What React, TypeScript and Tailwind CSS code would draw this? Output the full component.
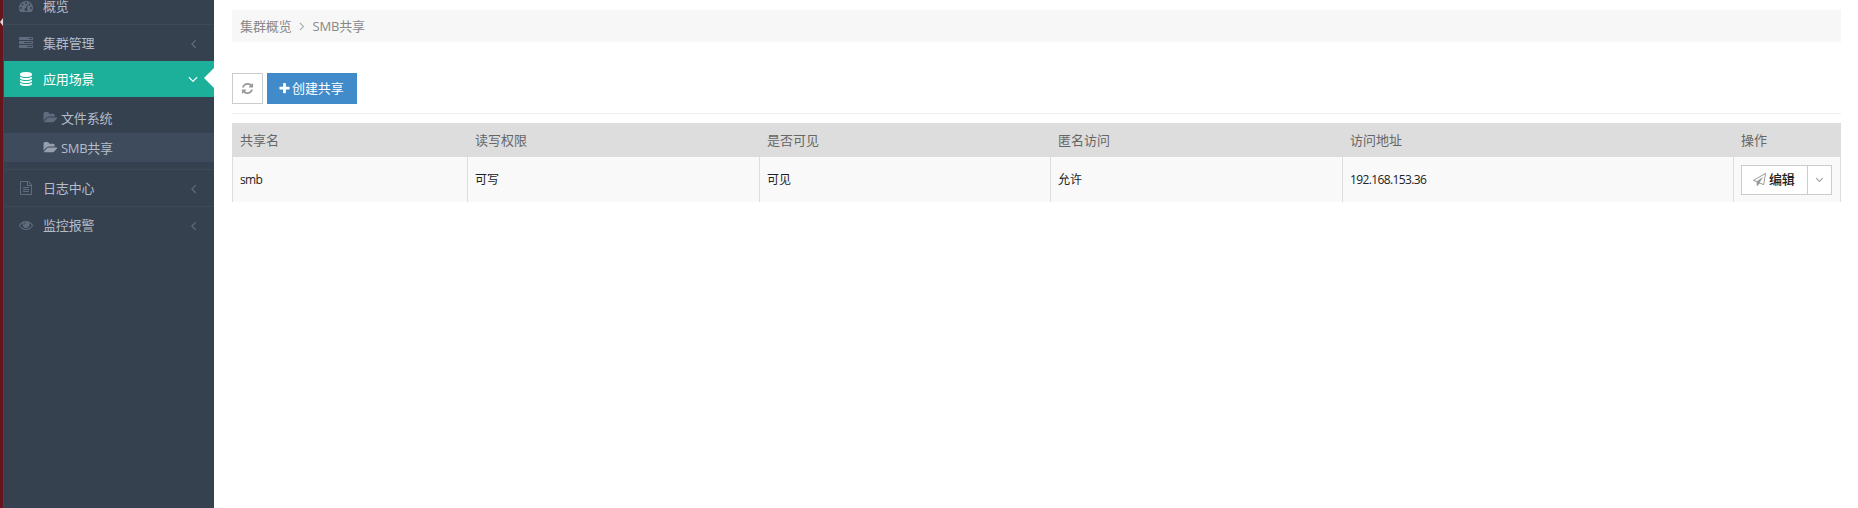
import React from 'react';

const dot = 'q0-53-37.5-90.5t-90.5-37.5-90.5 37.5-37.5 90.5 37.5 90.5 90.5 37.5 90.5-37.5 37.5-90.5z';
const bar = 'v256q0 26-19 45t-45 19h-1664q-26 0-45-19t-19-45v-256q0-26 19-45t45-19h1664q26 0 45 19t19 45z';
const disk = 'q237 0 443-43t325-127v170q0 69-103 128t-280 93.5-385 34.5-385-34.5-280-93.5-103-128v-170q119 84 325 127t443 43z';

const paths = {
  dashboard: `M384 1152${dot}m192-448${dot}m428 481l101-382q6-26-7.5-48.5t-38.5-29.5-48 6.5-30 39.5l-101 382q-60 5-107 43.5t-63 98.5q-20 77 20 146t117 89 146-20 89-117q16-60-6-117t-72-91zm660-33${dot}m-640-640${dot}m448 192${dot}m320 448q0 261-141 483-19 29-54 29h-1402q-35 0-54-29-141-221-141-483 0-182 71-348t191-286 286-191 348-71 348 71 286 191 191 286 71 348z`,
  tasks: `M1024 1408h640v-128h-640v128zm-384-512h1024v-128h-1024v128zm640-512h384v-128h-384v128zm512 832${bar}m0-512${bar}m0-512${bar}`,
  database: `M896 768${disk}m0 768${disk}m0-384${disk}m0-1152q208 0 385 34.5t280 93.5 103 128v128q0 69-103 128t-280 93.5-385 34.5-385-34.5-280-93.5-103-128v-128q0-69 103-128t280-93.5 385-34.5z`,
  folder: 'M1815 952q0 31-31 66l-336 396q-43 51-120.5 86.5t-143.5 35.5h-1088q-34 0-60.5-13t-26.5-43q0-31 31-66l336-396q43-51 120.5-86.5t143.5-35.5h1088q34 0 60.5 13t26.5 43zm-343-344v160h-832q-94 0-197 47.5t-164 119.5l-337 396-5 6q0-4-.5-12.5t-.5-12.5v-960q0-92 66-158t158-66h320q92 0 158 66t66 158v32h544q92 0 158 66t66 158z',
  file: 'M1596 380q28 28 48 76t20 88v1152q0 40-28 68t-68 28h-1344q-40 0-68-28t-28-68v-1600q0-40 28-68t68-28h896q40 0 88 20t76 48zm-444-244v376h376q-10-29-22-41l-313-313q-12-12-41-22zm384 1528v-1024h-416q-40 0-68-28t-28-68v-416h-768v1536h1280zm-1024-864q0-14 9-23t23-9h704q14 0 23 9t9 23v64q0 14-9 23t-23 9h-704q-14 0-23-9t-9-23v-64zm736 224q14 0 23 9t9 23v64q0 14-9 23t-23 9h-704q-14 0-23-9t-9-23v-64q0-14 9-23t23-9h704zm0 256q14 0 23 9t9 23v64q0 14-9 23t-23 9h-704q-14 0-23-9t-9-23v-64q0-14 9-23t23-9h704z',
  eye: 'M1664 960q-152-236-381-353 61 104 61 225 0 185-131.5 316.5t-316.5 131.5-316.5-131.5-131.5-316.5q0-121 61-225-229 117-381 353 133 205 333.5 326.5t434.5 121.5 434.5-121.5 333.5-326.5zm-720-384q0-20-14-34t-34-14q-125 0-214.5 89.5t-89.5 214.5q0 20 14 34t34 14 34-14 14-34q0-86 61-147t147-61q20 0 34-14t14-34zm848 384q0 34-20 69-140 230-376.5 368.5t-499.5 138.5-499.5-139-376.5-368q-20-35-20-69t20-69q140-229 376.5-368t499.5-139 499.5 139 376.5 368q20 35 20 69z',
  left: 'M1203 544q0 13-10 23l-393 393 393 393q10 10 10 23t-10 23l-50 50q-10 10-23 10t-23-10l-466-466q-10-10-10-23t10-23l466-466q10-10 23-10t23 10l50 50q10 10 10 23z',
  right: 'M1171 960q0 13-10 23l-466 466q-10 10-23 10t-23-10l-50-50q-10-10-10-23t10-23l393-393-393-393q-10-10-10-23t10-23l50-50q10-10 23-10t23 10l466 466q10 10 10 23z',
  down: 'M1395 736q0 13-10 23l-466 466q-10 10-23 10t-23-10l-466-466q-10-10-10-23t10-23l50-50q10-10 23-10t23 10l393 393 393-393q10-10 23-10t23 10l50 50q10 10 10 23z',
  plus: 'M1600 736v192q0 40-28 68t-68 28h-416v416q0 40-28 68t-68 28h-192q-40 0-68-28t-28-68v-416h-416q-40 0-68-28t-28-68v-192q0-40 28-68t68-28h416v-416q0-40 28-68t68-28h192q40 0 68 28t28 68v416h416q40 0 68 28t28 68z',
  refresh: 'M1639 1056q0 5-1 7-64 268-268 434.5t-478 166.5q-146 0-282.5-55t-243.5-157l-129 129q-19 19-45 19t-45-19-19-45v-448q0-26 19-45t45-19h448q26 0 45 19t19 45-19 45l-137 137q71 66 161 102t187 36q134 0 250-65t186-179q11-17 53-117 8-23 30-23h192q13 0 22.5 9.5t9.5 22.5zm25-800v448q0 26-19 45t-45 19h-448q-26 0-45-19t-19-45 19-45l138-138q-148-137-349-137-134 0-250 65t-186 179q-11 17-53 117-8 23-30 23h-199q-13 0-22.5-9.5t-9.5-22.5v-7q65-268 270-434.5t480-166.5q146 0 284 55.5t245 156.5l130-129q19-19 45-19t45 19 19 45z',
  plane: 'M1764 11q33 24 27 64l-256 1536q-5 29-32 45-14 8-31 8-11 0-24-5l-527-215-298 327q-18 21-47 21-14 0-23-4-19-7-30-23.5t-11-36.5v-452l-472-193q-37-14-40-55-3-39 32-59l1664-960q35-21 68 2zm-342 1499l221-1323-1434 827 336 137 863-639-478 797z',
};

type IconName = keyof typeof paths;

function Icon({ name, className }: { name: IconName; className: string }) {
  return (
    <svg viewBox="0 0 1792 1792" fill="currentColor" className={`shrink-0 overflow-visible ${className}`} aria-hidden="true">
      <path d={paths[name]} />
    </svg>
  );
}

function MenuItem({ icon, label, arrow, active }: { icon: IconName; label: string; arrow?: boolean; active?: boolean }) {
  return (
    <div
      className={
        active
          ? 'relative flex h-9 items-center bg-[#1caf9a] pl-[15px] pr-[13px] text-white'
          : 'flex h-[37px] items-center border-t border-[#3d4957] pl-[15px] pr-[13px] text-[#b4bcc8]'
      }
    >
      <Icon name={icon} className={active ? 'size-[14px]' : 'size-[14px] text-[#606c7d]'} />
      <span className="ml-[10px] flex-1">{label}</span>
      {arrow && <Icon name={active ? 'down' : 'left'} className={active ? 'size-4' : 'size-[15px] text-[#606c7d]'} />}
      {active && (
        <svg viewBox="0 0 10 20" className="absolute right-0 top-[7px] h-5 w-[10px]" aria-hidden="true">
          <path d="M10 0L0 10l10 10z" fill="#fff" />
        </svg>
      )}
    </div>
  );
}

function SubItem({ label, active }: { label: string; active?: boolean }) {
  return (
    <div className={active ? 'flex h-[29px] items-center bg-[#3e4b5c] pl-10 text-[#b4bcc8]' : 'flex h-[29px] items-center pl-10 text-[#b4bcc8]'}>
      <Icon name="folder" className={active ? 'size-[13px] text-[#959fad]' : 'size-[13px] text-[#606c7d]'} />
      <span className={active ? 'ml-[4px] tracking-[-0.3px]' : 'ml-[4px]'}>{label}</span>
    </div>
  );
}

const columns = [
  { title: '共享名', value: 'smb' },
  { title: '读写权限', value: '可写' },
  { title: '是否可见', value: '可见' },
  { title: '匿名访问', value: '允许' },
  { title: '访问地址', value: '192.168.153.36' },
];

export default function App() {
  return (
    <div className="flex h-[508px] w-[1858px] overflow-hidden bg-white font-['Open_Sans','Noto_Sans_CJK_SC',sans-serif] text-[13px] leading-5">
      <div className="w-1 shrink-0 border-r border-[#7b2d35] bg-[#65151b]">
        <svg viewBox="0 0 3 8" className="mt-[18px] h-2 w-[3px]" aria-hidden="true">
          <path d="M0 4l3-4v8z" fill="#ddd" />
        </svg>
      </div>
      <nav className="w-[210px] shrink-0 bg-[#364150] tracking-[-0.15px]">
        <div className="-mt-[13px]">
          <MenuItem icon="dashboard" label="概览" />
          <MenuItem icon="tasks" label="集群管理" arrow />
          <MenuItem icon="database" label="应用场景" arrow active />
          <div className="flex flex-col gap-px pb-[7px] pt-[6px]">
            <SubItem label="文件系统" />
            <SubItem label="SMB共享" active />
          </div>
          <MenuItem icon="file" label="日志中心" arrow />
          <MenuItem icon="eye" label="监控报警" arrow />
        </div>
      </nav>
      <main className="w-[1627px] pl-[18px] pt-[10px]">
        <div className="flex h-8 items-center bg-[#f7f7f7] pl-2 tracking-[-0.1px] text-[#888]">
          <span>集群概览</span>
          <Icon name="right" className="ml-[3px] mr-1 size-[14px] text-[#aaa]" />
          <span className="tracking-[-0.2px]">SMB共享</span>
        </div>
        <div className="mt-[31px] flex h-[41px] gap-1 border-b border-[#eee]">
          <button className="flex h-[31px] w-[31px] items-center justify-center border border-[#ccc] text-[#999]">
            <Icon name="refresh" className="size-[13px]" />
          </button>
          <button className="flex h-[31px] w-[90px] items-center bg-[#428bca] pl-[11px] text-white">
            <Icon name="plus" className="size-[13px]" />
            <span className="-mt-px ml-px tracking-[-0.1px]">创建共享</span>
          </button>
        </div>
        <table className="mt-[9px] w-full table-fixed border-separate border-spacing-0 text-left">
          <colgroup>
            <col className="w-[235px]" />
            <col className="w-[292px]" />
            <col className="w-[291px]" />
            <col className="w-[292px]" />
            <col className="w-[391px]" />
            <col />
          </colgroup>
          <thead>
            <tr className="h-[34px] bg-[#ddd] text-[#666]">
              {columns.map((c) => (
                <th key={c.title} className="py-0 pl-2 font-normal">{c.title}</th>
              ))}
              <th className="py-0 pl-2 font-normal">操作</th>
            </tr>
          </thead>
          <tbody>
            <tr className="h-[45px] bg-[#f9f9f9] text-xs text-[#222]">
              {columns.map((c) => (
                <td key={c.title} className="border-l border-[#ddd] py-0 pl-[7px] pt-px">
                  <span className={/^[a-z0-9.]+$/.test(c.value) ? 'text-[12px] tracking-[-0.62px]' : 'tracking-[-0.1px]'}>{c.value}</span>
                </td>
              ))}
              <td className="border-x border-[#ddd] py-0 pl-[7px]">
                <div className="flex h-[30px] w-[91px] border border-[#ccc] bg-white text-[13px]">
                  <button className="flex w-[66px] items-center border-r border-[#ccc] pl-[11px]">
                    <Icon name="plane" className="size-[13px] text-[#999]" />
                    <span className="ml-[3px] font-medium tracking-[-0.2px]">编辑</span>
                  </button>
                  <button className="flex flex-1 items-center justify-center text-[#999]">
                    <Icon name="down" className="size-[13px]" />
                  </button>
                </div>
              </td>
            </tr>
          </tbody>
        </table>
      </main>
    </div>
  );
}
